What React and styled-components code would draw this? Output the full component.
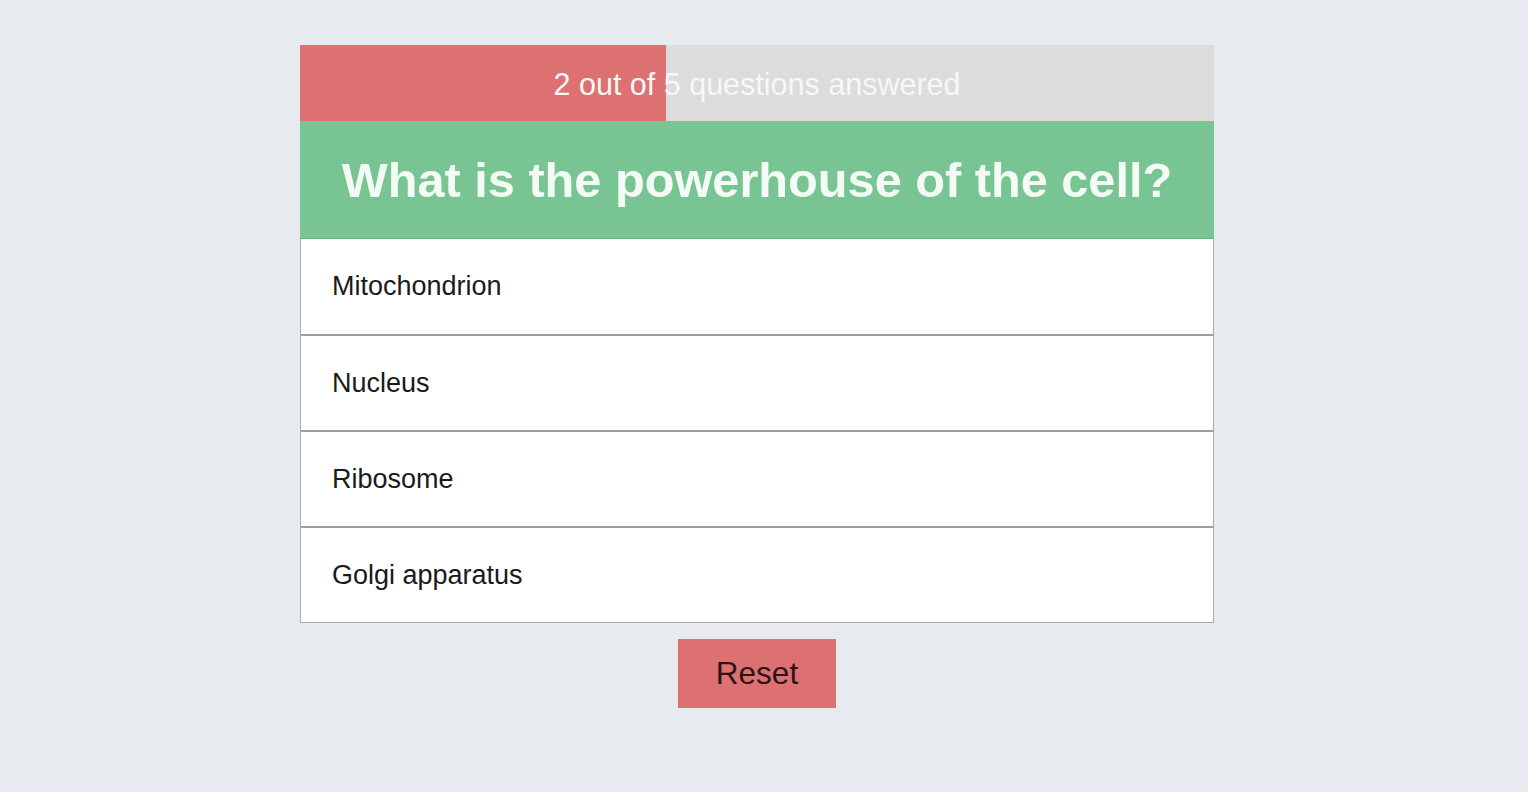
import React from "react";
import styled, { createGlobalStyle } from "styled-components";

const Global = createGlobalStyle`
  html, body { margin: 0; padding: 0; background: #e7eaef; }
  body { font-family: "Liberation Sans", Arial, sans-serif; }
`;

const Page = styled.div`
  min-height: 792px;
  display: flex;
  flex-direction: column;
  align-items: center;
  padding: 45px 14px 0 0;
  box-sizing: border-box;
`;

const Card = styled.div`
  width: 914px;
  display: flex;
  flex-direction: column;
`;

const Progress = styled.div`
  position: relative;
  height: 76px;
  background: #dcdcdc;
  display: flex;
  align-items: center;
  justify-content: center;
`;

const Fill = styled.div`
  position: absolute;
  left: 0;
  top: 0;
  bottom: 0;
  background: #dd7171;
`;

const ProgressText = styled.span`
  position: relative;
  color: #f7f7f7;
  font-size: 30.5px;
  margin-top: 2px;
`;

const Question = styled.h1`
  margin: 0;
  height: 118px;
  background: #78c593;
  color: #f4fbf6;
  font-size: 48.7px;
  font-weight: 700;
  display: flex;
  align-items: center;
  justify-content: center;
  border-bottom: 1px solid #6aae83;
  box-sizing: border-box;
`;

const Options = styled.ul`
  list-style: none;
  margin: 0;
  padding: 0;
  border: 1px solid #a9abad;
  border-top: none;
`;

const Option = styled.li`
  height: ${(p) => (p.$first ? "95px" : "96px")};
  display: flex;
  align-items: center;
  padding-left: 31px;
  background: #fff;
  color: #1a1a1a;
  font-size: 27px;
  border-top: ${(p) => (p.$first ? "none" : "2px solid #9c9ea1")};
  box-sizing: border-box;
`;

const ResetButton = styled.button`
  margin-top: 16px;
  width: 158px;
  height: 69px;
  background: #dd7171;
  border: none;
  color: #2a1616;
  font-family: "Liberation Sans", Arial, sans-serif;
  font-size: 31.5px;
  cursor: pointer;
`;

const options = ["Mitochondrion", "Nucleus", "Ribosome", "Golgi apparatus"];

export default function App() {
  const answered = 2;
  const total = 5;
  return (
    <>
      <Global />
      <Page>
        <Card>
          <Progress>
            <Fill style={{ width: `${(answered / total) * 100}%` }} />
            <ProgressText>
              {answered} out of {total} questions answered
            </ProgressText>
          </Progress>
          <Question>What is the powerhouse of the cell?</Question>
          <Options>
            {options.map((o, i) => (
              <Option key={o} $first={i === 0}>
                {o}
              </Option>
            ))}
          </Options>
        </Card>
        <ResetButton>Reset</ResetButton>
      </Page>
    </>
  );
}
